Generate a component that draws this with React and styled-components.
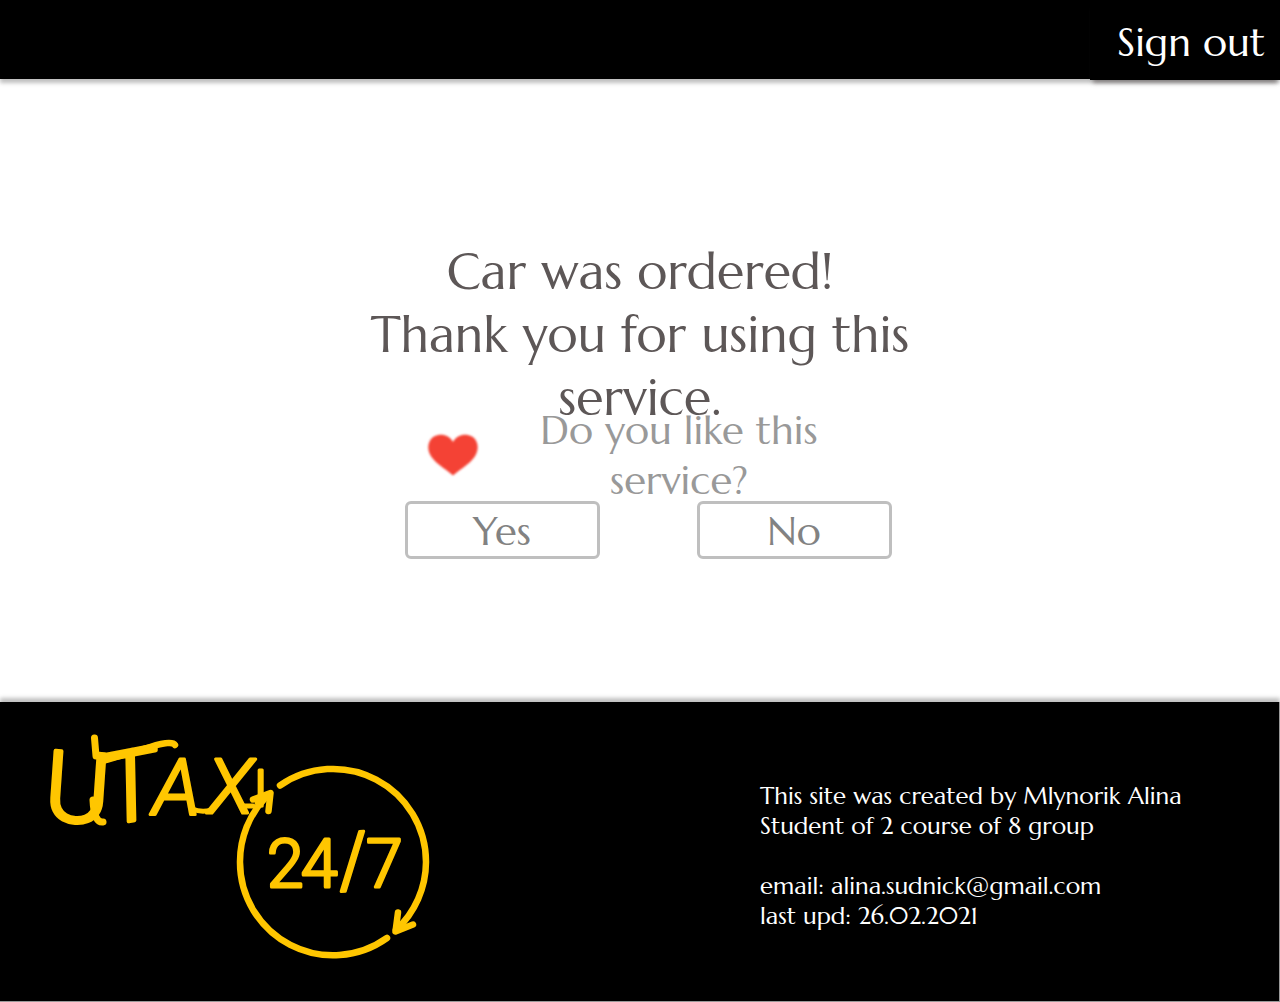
import React from "react";
import styled, { createGlobalStyle } from "styled-components";

const GlobalStyle = createGlobalStyle`
  *, *::before, *::after { box-sizing: border-box; }
  body {
    margin: 0;
    background: #fff;
    font-family: Marcellus, Lato, "Liberation Sans", sans-serif;
  }
`;

const Page = styled.div`
  min-height: 100vh;
  display: flex;
  flex-direction: column;
`;

const Header = styled.header`
  display: flex;
  justify-content: flex-end;
  height: 79px;
  background: #000;
  box-shadow: 0 4px 4px rgba(0, 0, 0, 0.25);
`;

const SignOut = styled.button`
  width: 190px;
  height: 80px;
  padding: 4px 15px 0 0;
  border: 0;
  background: #000;
  color: #fff;
  font: inherit;
  font-size: 40px;
  line-height: 50px;
  text-align: right;
  white-space: nowrap;
  cursor: pointer;
  box-shadow: 0 6px 4px -3px rgba(93, 87, 87, 0.6);
`;

const Main = styled.main`
  flex: 1;
  display: flex;
  flex-direction: column;
  align-items: center;
  padding: 161px 16px 140px;
`;

const Title = styled.h1`
  max-width: 600px;
  margin: 0;
  color: #5d5757;
  font-weight: 400;
  font-size: 50px;
  line-height: 63px;
  text-align: center;
`;

const Survey = styled.form`
  width: 487px;
  max-width: 100%;
  margin: -24px 0 0 16px;
`;

const Prompt = styled.div`
  display: flex;
  align-items: center;
  gap: 48px;
  margin-bottom: -4px;
  padding: 0 62px 0 20px;
`;

const Question = styled.p`
  flex: 1;
  margin: 0;
  color: #999;
  font-size: 40px;
  line-height: 50px;
  text-align: center;
`;

const Heart = styled.svg`
  flex: none;
  width: 56px;
  height: 48px;
`;

const Answers = styled.div`
  display: flex;
  justify-content: space-between;
  gap: 16px;
`;

const Answer = styled.button`
  width: 195px;
  height: 58px;
  padding: 2px 0 0;
  border: 3px solid #bfbfbf;
  border-radius: 6px;
  background: #fff;
  color: #828282;
  font: inherit;
  font-size: 40px;
  line-height: 50px;
  cursor: pointer;
`;

const Footer = styled.footer`
  display: flex;
  justify-content: space-between;
  height: 300px;
  padding: 30px 97px 0 48px;
  border: solid #999;
  border-width: 0 1px 1px 0;
  background: #000;
  color: #fff;
  box-shadow: 0 -4px 4px rgba(0, 0, 0, 0.25);
`;

const Logo = styled.svg`
  flex: none;
  width: 384px;
  height: 230px;
  overflow: visible;
`;

const Credits = styled.address`
  width: 422px;
  padding-top: 49px;
  font-style: normal;
  font-size: 24px;
  line-height: 30px;
  white-space: nowrap;
`;

const Line = styled.p`
  margin: 0 0 ${(p) => (p.$spaced ? "30px" : "0")};
`;

const MailLink = styled.a`
  color: inherit;
  text-decoration: none;
`;

function HeartIcon() {
  return (
    <Heart viewBox="0 0 56 48" aria-hidden="true">
      <defs>
        <filter id="soft" x="-10%" y="-10%" width="120%" height="120%">
          <feGaussianBlur stdDeviation="0.9" />
        </filter>
      </defs>
      <path
        filter="url(#soft)"
        fill="#f44336"
        d="M28 44.500C22 39 13.500 35 6.500 26C1 18 3 9 9 5.500C15.500 2 24 3.500 28 11C32 3.500 40.500 2 47 5.500C53 9 55 18 49.500 26C42.500 35 34 39 28 44.500Z"
      />
    </Heart>
  );
}

function UTaxiLogo() {
  return (
    <Logo viewBox="48 732 384 230" role="img" aria-label="UTaxi 24/7">
      <g
        fill="#ffc600"
        stroke="#ffc600"
        strokeWidth="3"
        strokeLinejoin="round"
        fontFamily="Roboto, sans-serif"
        fontWeight="300"
      >
        <text transform="rotate(4 76 822)" x="43" y="822" fontSize="98" strokeWidth="4">U</text>
        <text transform="rotate(-11 136 820)" x="108" y="820" fontSize="98" fontStyle="italic" strokeWidth="4">T</text>
        <text x="153" y="815" fontSize="78" fontStyle="italic">A</text>
        <text x="208" y="813" fontSize="76" fontStyle="italic">X</text>
        <text x="254" y="806" fontSize="50">I</text>
        <text x="267 301 366" y="887" fontSize="66">247</text>
        <text transform="rotate(-4 354 862)" x="338" y="886" fontSize="76">/</text>
      </g>
      <g
        fill="none"
        stroke="#ffc600"
        strokeWidth="6.500"
        strokeLinecap="round"
        strokeLinejoin="round"
      >
        {/* pen flourishes around the wordmark */}
        <path d="M94.500 738L96 756M93 800Q94 823 103 822" strokeWidth="7" />
        <path d="M103 761L150 747Q172 740 175 745" />
        <path d="M192 809Q202 813 211 810M244 806L253 806" strokeWidth="5" />
        <path d="M280 785.500A93 93 0 0 1 426 862A93 93 0 0 1 396 930" />
        <path d="M387 938A93 93 0 0 1 240 862A93 93 0 0 1 266 797" />
        <path d="M398 912.500L395.500 931.500L413 924.500" />
        <path d="M253 799.500L270.500 793L268.500 811M258 803L266 795" />
      </g>
    </Logo>
  );
}

export default function App() {
  return (
    <Page>
      <GlobalStyle />
      <Header>
        <SignOut type="button">Sign out</SignOut>
      </Header>
      <Main>
        <Title>
          Car was ordered!
          <br />
          Thank you for using this service.
        </Title>
        <Survey onSubmit={(e) => e.preventDefault()}>
          <Prompt>
            <HeartIcon />
            <Question>Do you like this service?</Question>
          </Prompt>
          <Answers>
            <Answer type="submit">Yes</Answer>
            <Answer type="submit">No</Answer>
          </Answers>
        </Survey>
      </Main>
      <Footer>
        <UTaxiLogo />
        <Credits>
          <Line>This site was created by Mlynorik Alina</Line>
          <Line $spaced>Student of 2 course of 8 group</Line>
          <Line>
            email: <MailLink href="mailto:alina.sudnick@gmail.com">alina.sudnick@gmail.com</MailLink>
          </Line>
          <Line>last upd: 26.02.2021</Line>
        </Credits>
      </Footer>
    </Page>
  );
}
